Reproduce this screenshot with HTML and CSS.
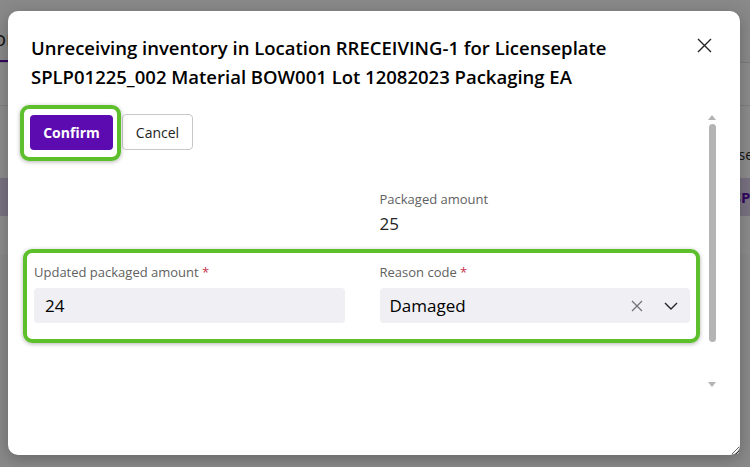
FILE: index.html
```html
<!DOCTYPE html>
<html>
  <head>
    <meta charset="UTF-8">
    <title>Unreceive inventory</title>
    <link rel="stylesheet" href="styles.css">
  </head>
  <body>
    <div class="page">
      <div class="page-header">
        <span class="tab active">Store</span>
        <span class="tab">Receive</span>
      </div>
      <div class="toolbar"></div>
      <div class="table-head">
        <span>Location</span>
        <span>Use</span>
      </div>
      <div class="table-row selected">
        <span>RRECEIVING-1</span>
        <span>SP0</span>
      </div>
      <div class="table-row"></div>
    </div>

    <div class="overlay"></div>

    <div class="dialog">
      <div class="dialog-header">
        <h2 class="dialog-title">Unreceiving inventory in Location RRECEIVING-1 for Licenseplate SPLP01225_002 Material BOW001 Lot 12082023 Packaging EA</h2>
        <button class="close-button" aria-label="Close">
          <svg width="15" height="15" viewBox="0 0 15 15">
            <path d="M1 1 L14 14 M14 1 L1 14" stroke="#242424" stroke-width="1.4" fill="none"/>
          </svg>
        </button>
      </div>

      <div class="dialog-body">
        <div class="scroll-content">
          <div class="actions">
            <button class="btn btn-primary highlight hl-button">Confirm</button>
            <button class="btn btn-secondary">Cancel</button>
          </div>

          <div class="form-grid">
            <div class="field empty"></div>
            <div class="field">
              <span class="field-label">Packaged amount</span>
              <span class="field-value">25</span>
            </div>
          </div>

          <div class="form-grid highlight hl-row">
            <div class="field">
              <label class="field-label" for="updated-amount">Updated packaged amount <span class="required">*</span></label>
              <input class="text-input" id="updated-amount" type="text" value="24">
            </div>
            <div class="field">
              <label class="field-label">Reason code <span class="required">*</span></label>
              <div class="select-input">
                <span class="select-value">Damaged</span>
                <svg class="clear-icon" width="12" height="12" viewBox="0 0 12 12">
                  <path d="M1 1 L11 11 M11 1 L1 11" stroke="#707070" stroke-width="1.2" fill="none"/>
                </svg>
                <svg class="chevron-icon" width="14" height="8" viewBox="0 0 14 8">
                  <path d="M1 1 L7 7 L13 1" stroke="#242424" stroke-width="1.4" fill="none"/>
                </svg>
              </div>
            </div>
          </div>
        </div>

        <div class="scrollbar">
          <span class="scroll-arrow up"></span>
          <span class="scroll-thumb"></span>
          <span class="scroll-track"></span>
          <span class="scroll-arrow down"></span>
        </div>
      </div>
    </div>
  </body>
</html>
```

FILE: styles.css
```css
html, body {
  margin: 0;
  height: 100%;
}
body {
  font-family: "Open Sans", "Noto Sans", Arial, sans-serif;
  color: #242424;
  overflow: hidden;
  position: relative;
}

/* page behind the dialog */
.page {
  height: 100%;
  background: #fafafa;
}
.page-header {
  display: flex;
  align-items: flex-end;
  height: 62px;
  margin-left: -36px;
  border-bottom: 1px solid #e0e0e0;
}
.tab {
  font-size: 20px;
  padding: 0 12px 8px;
  color: #242424;
  border-bottom: 2px solid transparent;
}
.tab.active {
  border-bottom-color: #5b0baf;
}
.toolbar {
  height: 42px;
  border-bottom: 1px solid #e8e8e8;
  background: #fff;
}
.table-head {
  display: flex;
  justify-content: space-between;
  height: 72px;
  align-items: flex-end;
  box-sizing: border-box;
  padding: 0 0 14px 10px;
  margin-right: -3px;
  font-size: 14px;
  background: #fff;
}
.table-row {
  display: flex;
  justify-content: space-between;
  align-items: center;
  height: 38px;
  padding: 0 0 0 10px;
  margin-right: -9px;
  font-size: 15px;
  background: #fff;
}
.table-row.selected {
  background: #ddd0ec;
  color: #5b0baf;
  font-weight: 700;
}
.overlay {
  position: absolute;
  inset: 0;
  background: rgba(0, 0, 0, 0.45);
}

/* dialog */
.dialog {
  position: absolute;
  left: 8px;
  top: 11px;
  width: 732px;
  height: 444px;
  background: #fff;
  border-radius: 10px;
  box-shadow: 0 4px 16px rgba(0, 0, 0, 0.25);
  display: flex;
  flex-direction: column;
  resize: both;
  overflow: hidden;
}
.dialog-header {
  display: flex;
  align-items: flex-start;
  padding: 22px 28px 0 23px;
}
.dialog-title {
  flex: 1;
  margin: 0;
  font-size: 18.5px;
  line-height: 29px;
  font-weight: 600;
  color: #000;
}
.close-button {
  border: none;
  background: none;
  padding: 0;
  margin: 5px 0 0 20px;
  width: 15px;
  height: 15px;
  cursor: pointer;
}
.dialog-body {
  flex: 1;
  display: flex;
  min-height: 0;
  padding-top: 23px;
}
.scroll-content {
  flex: 1;
  padding: 0 18px 0 22px;
}

/* buttons */
.actions {
  display: flex;
  gap: 9px;
  align-items: center;
}
.btn {
  font-family: inherit;
  border-radius: 4px;
  cursor: pointer;
  font-size: 14px;
}
.btn-primary {
  background: #5b0baf;
  color: #fff;
  border: none;
  width: 83px;
  height: 35px;
  font-weight: 700;
}
.btn-secondary {
  background: #fff;
  color: #242424;
  border: 1px solid #c8c8c8;
  width: 71px;
  height: 36px;
}

/* highlight rings */
.highlight {
  position: relative;
}
.highlight::after {
  content: "";
  position: absolute;
  border: 4px solid #5cbf2b;
  border-radius: 9px;
  box-shadow: 0 1px 4px rgba(0, 0, 0, 0.3);
  pointer-events: none;
}
.hl-button::after {
  inset: -10px -8px -11px -10px;
}
.hl-row::after {
  inset: -14px -10px -20px -11px;
}

/* form */
.form-grid {
  display: grid;
  grid-template-columns: 1fr 1fr;
  column-gap: 35px;
  margin-left: 4px;
}
.actions + .form-grid {
  margin-top: 40px;
}
.form-grid + .form-grid {
  margin-top: 27px;
}
.field {
  display: flex;
  flex-direction: column;
}
.field-label {
  font-size: 13px;
  line-height: 18px;
  color: #616161;
  margin-bottom: 4px;
}
.hl-row .field-label {
  margin-bottom: 7px;
}
.required {
  color: #c4314b;
}
.field-value {
  font-size: 17px;
  line-height: 24px;
  color: #242424;
}
.text-input,
.select-input {
  height: 35px;
  box-sizing: border-box;
  background: #efeff4;
  border: none;
  border-radius: 4px;
  font-family: inherit;
  font-size: 17px;
  color: #000;
}
.text-input {
  padding: 0 11px;
  width: 100%;
}
.select-input {
  display: flex;
  align-items: center;
  padding: 0 12px 0 10px;
}
.select-value {
  flex: 1;
}
.clear-icon {
  margin-right: 21px;
}

/* scrollbar */
.scrollbar {
  width: 8px;
  margin-right: 24px;
  display: flex;
  flex-direction: column;
  align-items: center;
  padding: 1px 0 68px;
}
.scroll-arrow {
  width: 0;
  height: 0;
  border-left: 4px solid transparent;
  border-right: 4px solid transparent;
}
.scroll-arrow.up {
  border-bottom: 5px solid #b4b4b4;
  margin-bottom: 4px;
}
.scroll-arrow.down {
  border-top: 5px solid #b4b4b4;
}
.scroll-thumb {
  width: 7px;
  height: 218px;
  background: #b4b4b4;
  border-radius: 4px;
}
.scroll-track {
  flex: 1;
}
```
